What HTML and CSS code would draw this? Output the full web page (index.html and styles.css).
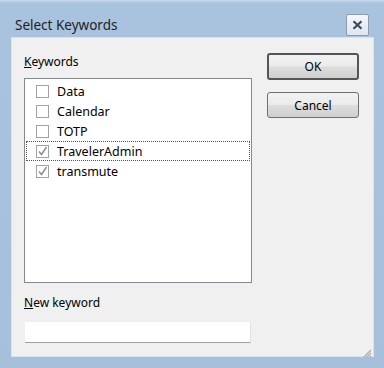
FILE: index.html
```html
<!DOCTYPE html>
<html>
<head>
<meta charset="utf-8">
<link rel="stylesheet" href="styles.css">
</head>
<body>
<div class="window">
  <div class="titlebar">
    <span class="title">Select Keywords</span>
    <div class="close">
      <svg width="11" height="10" viewBox="0 0 11 10"><path d="M1.5 1.2 L9.5 8.8 M9.5 1.2 L1.5 8.8" stroke="#3b4a60" stroke-width="2.2" fill="none"/></svg>
    </div>
  </div>
  <div class="content">
    <div class="left">
      <div class="label"><u>K</u>eywords</div>
      <div class="listbox">
        <div class="item"><span class="cb"></span><span>Data</span></div>
        <div class="item"><span class="cb"></span><span>Calendar</span></div>
        <div class="item"><span class="cb"></span><span>TOTP</span></div>
        <div class="item focus"><span class="cb"><svg width="11" height="11" viewBox="0 0 11 11"><path d="M2 5.5 L4.5 8.5 L9.5 1" stroke="#8a8a8a" stroke-width="1.4" fill="none"/></svg></span><span>TravelerAdmin</span></div>
        <div class="item"><span class="cb"><svg width="11" height="11" viewBox="0 0 11 11"><path d="M2 5.5 L4.5 8.5 L9.5 1" stroke="#8a8a8a" stroke-width="1.4" fill="none"/></svg></span><span>transmute</span></div>
      </div>
      <div class="label label2"><u>N</u>ew keyword</div>
      <div class="input"></div>
    </div>
    <div class="right">
      <div class="btn ok">OK</div>
      <div class="btn">Cancel</div>
    </div>
    <div class="grip">
      <svg width="10" height="10" viewBox="0 0 10 10"><path d="M9 2 L2 9 M9 5 L5 9 M9 8 L8 9" stroke="#a8a8a8" stroke-width="1.2" fill="none"/></svg>
    </div>
  </div>
</div>
</body>
</html>
```
FILE: styles.css
```css
html, body { margin: 0; padding: 0; }
body {
  font-family: "Noto Sans", "Open Sans", sans-serif;
  font-size: 12px;
  color: #000;
  width: 384px;
  height: 368px;
  overflow: hidden;
}
.window {
  width: 384px;
  height: 368px;
  box-sizing: border-box;
  background: linear-gradient(#b9cfe6 0, #a9c3de 3px, #a6c0dc 100%);
  border-top: 1px solid #c6d8ec;
  padding: 0 11px 12px 12px;
  display: flex;
  flex-direction: column;
}
.titlebar {
  height: 37px;
  box-sizing: border-box;
  padding-top: 10px;
  display: flex;
  align-items: center;
  justify-content: space-between;
}
.title {
  padding-left: 3px;
  font-size: 13.5px;
  color: #1e1e1e;
}
.close {
  width: 21px;
  height: 20px;
  margin-right: 4px;
  border: 1px solid #8a9bb3;
  background: linear-gradient(#f4f7fb, #dfe6ef);
  border-radius: 2px;
  display: flex;
  align-items: center;
  justify-content: center;
}
.content {
  flex: 1;
  background: #f0f0f0;
  box-shadow: 0 0 0 1px #d7e3f0;
  display: flex;
  padding: 16px 0 0 12px;
  position: relative;
}
.left {
  width: 228px;
  display: flex;
  flex-direction: column;
}
.label {
  line-height: 16px;
  height: 16px;
}
.listbox {
  margin-top: 8px;
  height: 205px;
  box-sizing: border-box;
  border: 1px solid #828790;
  background: #fff;
  padding: 2px 1px 0 1px;
}
.item {
  height: 20px;
  display: flex;
  align-items: center;
  box-sizing: border-box;
  padding-left: 9px;
  border: 1px dotted transparent;
  font-size: 12.5px;
}
.item.focus {
  border: 1px dotted #555;
}
.cb {
  width: 13px;
  height: 13px;
  box-sizing: border-box;
  border: 1px solid #a2a2a2;
  background: #fff;
  margin-right: 8px;
  display: flex;
  align-items: center;
  justify-content: center;
}
.label2 {
  margin-top: 12px;
}
.input {
  margin-top: 11px;
  margin-left: 1px;
  width: 226px;
  height: 21px;
  box-sizing: border-box;
  background: #fff;
  border-bottom: 1px solid #a0a0a0;
  border-right: 1px solid #e3e3e3;
}
.right {
  margin-left: 15px;
  margin-top: -1px;
  display: flex;
  flex-direction: column;
  gap: 12px;
}
.btn {
  width: 92px;
  height: 26px;
  box-sizing: border-box;
  border: 1px solid #707070;
  border-radius: 3px;
  background: linear-gradient(#f2f2f2 0%, #ebebeb 48%, #dddddd 52%, #cfcfcf 100%);
  display: flex;
  align-items: center;
  justify-content: center;
  color: #000;
}
.ok {
  height: 27px;
  border: 2px solid #555;
}
.grip {
  position: absolute;
  right: 1px;
  bottom: 1px;
  width: 10px;
  height: 10px;
}
```
